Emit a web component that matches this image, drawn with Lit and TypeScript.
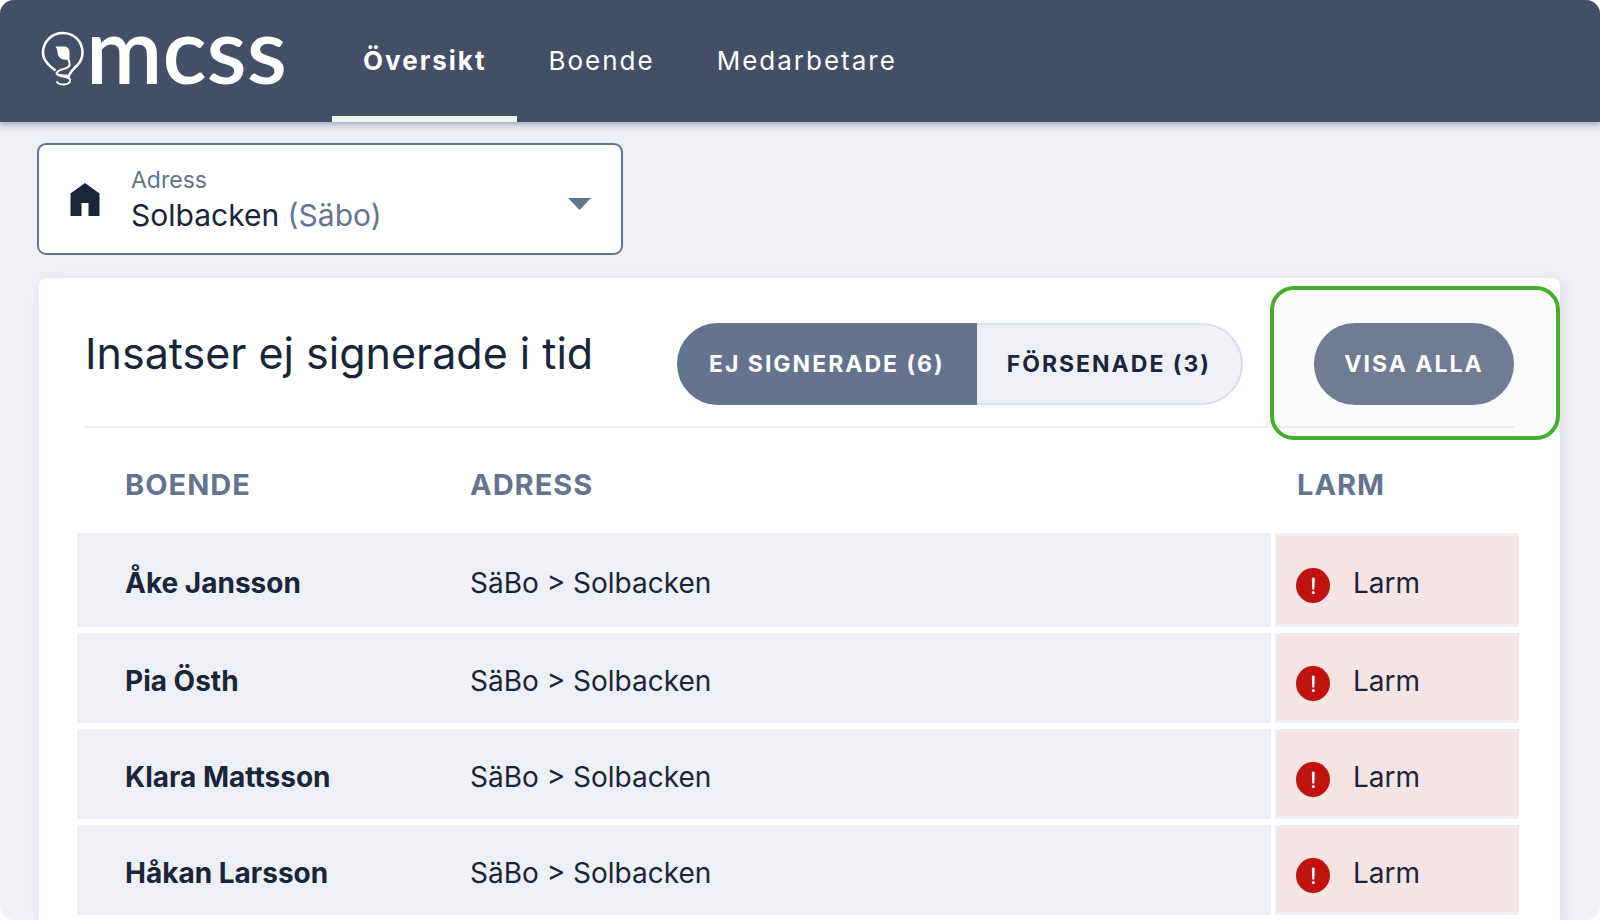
import { LitElement, html, css, svg } from "lit";
import { customElement, property, state } from "lit/decorators.js";
import { classMap } from "lit/directives/class-map.js";

interface Row {
  name: string;
  address: string;
  alarm: string;
}

@customElement("mcss-logo")
export class McssLogo extends LitElement {
  static styles = css`
    :host {
      display: block;
      width: 248px;
    }
    .logo {
      display: flex;
      align-items: center;
      gap: 1px;
      height: 118px;
      color: #fff;
      text-decoration: none;
    }
    .word {
      padding-bottom: 20px;
      font: 600 92px/112px "Lato Semibold", Lato, sans-serif;
    }
  `;

  render() {
    return html`<a class="logo" href="#">
      <svg width="44" height="56" viewBox="0 0 44 56" fill="none" stroke="#fff" aria-hidden="true">
        ${svg`
          <path stroke-width="2.6" d="M14.500 39.500C11.500 37.500 9 35.500 6.500 32.500C3.500 29 2 26 2 21.500C2 10.500 11 2 22 2C33 2 41.500 10.500 41.500 21.500C41.500 27 39.500 31 36 34.500C32 38.500 28 42 27.500 46.500" />
          <path stroke-width="1.900" d="M26.500 27C29.500 32 30 35.500 25 37.200C20 39 16 39.500 15.500 42.500C15.500 46 28 45 29 48.500C29.500 51 28 53.200 23 53.500C19.500 53.600 17 53 15.500 50.500M28 45C26 43.500 19 45.500 15.500 42.500" />
          <path fill="#fff" stroke="none" d="M14.500 15.500H24.500C27.500 16.500 28.500 19 28.500 22V28.500C22.500 29.500 18.500 28 17 24C16.300 20.500 16.500 18 14.500 15.500Z" />
        `}
      </svg>
      <span class="word">mcss</span>
    </a>`;
  }
}

@customElement("address-select")
export class AddressSelect extends LitElement {
  static styles = css`
    :host {
      display: block;
    }
    .box {
      position: relative;
      display: flex;
      align-items: center;
      box-sizing: border-box;
      width: 586px;
      max-width: 100%;
      height: 112px;
      padding: 0 30px 0 31px;
      border: 2px solid #64748f;
      border-radius: 9px;
      background: #fff;
      color: #1b2539;
    }
    .texts {
      display: flex;
      flex: 1;
      flex-direction: column;
      margin-left: 31px;
    }
    .label {
      font-size: 23px;
      line-height: 32px;
      color: #64748f;
    }
    .value {
      font-size: 30px;
      line-height: 38px;
    }
    .kind {
      color: #64748f;
    }
    .arrow {
      margin-top: 10px;
    }
    .native {
      position: absolute;
      inset: 0;
      width: 100%;
      height: 100%;
      opacity: 0;
      cursor: pointer;
    }
  `;

  render() {
    return html`<div class="box">
      <svg width="30" height="33" viewBox="0 0 30 33" aria-hidden="true">
        <path fill="#1b2539" d="M15 0L29.500 10.500V33H18.500V20H11.500V33H.5V10.500Z" />
      </svg>
      <div class="texts">
        <label class="label" for="address">Adress</label>
        <span class="value">Solbacken <span class="kind">(Säbo)</span></span>
      </div>
      <svg class="arrow" width="23" height="12" viewBox="0 0 23 12" aria-hidden="true">
        <path fill="#64748f" d="M0 0H23L11.500 12Z" />
      </svg>
      <select class="native" id="address">
        <option>Solbacken (Säbo)</option>
      </select>
    </div>`;
  }
}

@customElement("alarm-table")
export class AlarmTable extends LitElement {
  @property({ attribute: false }) rows: Row[] = [];

  static styles = css`
    :host {
      display: block;
    }
    .table {
      width: 100%;
      table-layout: fixed;
      border-collapse: separate;
      border-spacing: 0;
      font-size: 28px;
      line-height: 36px;
      text-align: left;
    }
    .head {
      box-sizing: border-box;
      height: 105px;
      padding: 8px 0 0 48px;
      color: #64748f;
      font-size: 29px;
      font-weight: 700;
      letter-spacing: 1px;
    }
    .head.resident {
      width: 393px;
    }
    .head.alarm {
      width: 248px;
      padding-left: 26px;
    }
    .cell {
      height: 90px;
      padding: 0 0 0 48px;
      border-bottom: 6px solid #fff;
      background: #eff0f5;
      background-clip: padding-box;
    }
    .head.address,
    .cell.address {
      padding-left: 0;
    }
    .first .cell {
      height: 94px;
    }
    .row:last-child .cell {
      border-bottom: 0;
    }
    .name {
      font-weight: 700;
    }
    .cell.alarm {
      padding-left: 21px;
      border-left: 4px solid #fff;
      background-color: #f4e4e3;
      box-shadow: inset 2px 0 #eff0f5, inset 0 3px #eff0f5, inset 0 -3px #eff0f5;
    }
    .content {
      display: flex;
      align-items: center;
      padding-top: 6px;
    }
    .content.flag {
      gap: 23px;
    }
    .badge {
      margin-top: 4px;
    }
  `;

  render() {
    return html`<table class="table">
      <thead>
        <tr>
          <th class="head resident">BOENDE</th>
          <th class="head address">ADRESS</th>
          <th class="head alarm">LARM</th>
        </tr>
      </thead>
      <tbody>
        ${this.rows.map(
          (r, i) => html`<tr class=${classMap({ row: true, first: i === 0 })}>
            <td class="cell name"><div class="content">${r.name}</div></td>
            <td class="cell address"><div class="content">${r.address}</div></td>
            <td class="cell alarm">
              <div class="content flag">
                <svg class="badge" width="34" height="35" viewBox="0 0 34 35" aria-hidden="true">
                  <ellipse cx="17" cy="17.500" rx="17" ry="17.500" fill="#c11212" />
                  <path fill="#fff" d="M15.800 10.500Q17.300 8.500 18.800 10.500L18.300 21.500H16.300Z" />
                  <circle cx="17.300" cy="24.500" r="1.500" fill="#fff" />
                </svg>
                ${r.alarm}
              </div>
            </td>
          </tr>`
        )}
      </tbody>
    </table>`;
  }
}

@customElement("app-root")
export class AppRoot extends LitElement {
  @state() private tab = "Översikt";
  @state() private filter = 0;

  private tabs = ["Översikt", "Boende", "Medarbetare"];
  private filters = ["EJ SIGNERADE (6)", "FÖRSENADE (3)"];
  private rows: Row[] = ["Åke Jansson", "Pia Östh", "Klara Mattsson", "Håkan Larsson"].map((name) => ({
    name,
    address: "SäBo > Solbacken",
    alarm: "Larm",
  }));

  static styles = css`
    :host {
      display: flex;
      flex-direction: column;
      min-height: 100vh;
      overflow: hidden;
      border-radius: 14px;
      background: #eff0f5;
      color: #1b2539;
      font-family: Inter, sans-serif;
    }
    .top {
      position: relative;
      display: flex;
      align-items: stretch;
      height: 122px;
      padding-left: 41px;
      background: #444e66;
      box-shadow: 0 1px 8px #64748fcc;
    }
    .tabs {
      display: flex;
      margin-left: 43px;
    }
    .tab {
      display: flex;
      align-items: center;
      padding: 4px 31px 0;
      border-bottom: 6px solid transparent;
      color: #fff;
      font-size: 26px;
      letter-spacing: 2px;
      text-decoration: none;
    }
    .tab.active {
      border-color: #eff1f3;
      font-weight: 700;
    }
    .main {
      display: flex;
      flex: 1;
      flex-direction: column;
      padding: 21px 40px 0 37px;
    }
    .card {
      flex: 1;
      margin: 23px 0 0 2px;
      padding: 45px 41px 0 38px;
      border-radius: 8px 8px 0 0;
      background: #fff;
      box-shadow: 3px 4px 14px #64748f26;
    }
    .bar {
      display: flex;
      align-items: flex-start;
      margin: 0 5px 0 8px;
      padding-bottom: 21px;
      border-bottom: 2px solid #eff0f5;
    }
    .title {
      flex: 1;
      margin: 0;
      font-size: 43px;
      font-weight: 400;
      line-height: 60px;
    }
    .pill {
      box-sizing: border-box;
      height: 82px;
      padding: 0 30px;
      border: 2px solid #dcdfec;
      border-radius: 41px;
      background: #eff0f5;
      color: #1b2539;
      font: 700 23px/28px Inter, sans-serif;
      letter-spacing: 2px;
      cursor: pointer;
    }
    .group {
      display: flex;
      margin-right: 71px;
    }
    .group .pill:first-child {
      border-radius: 41px 0 0 41px;
    }
    .group .pill:last-child {
      border-left-width: 0;
      border-radius: 0 41px 41px 0;
    }
    .pill.on {
      border-color: #64748f;
      background: #64748f;
      color: #fff;
    }
    .spot {
      position: relative;
      isolation: isolate;
    }
    .spot::before {
      content: "";
      position: absolute;
      z-index: -1;
      inset: -37px -46px -35px -44px;
      border: 4px solid #44b02a;
      border-radius: 24px;
      background: rgba(0, 0, 0, 0.016);
      background-clip: padding-box;
    }
    .pill.all {
      width: 200px;
      padding: 0;
      border-color: #717b94;
      background: #717b94;
      color: #fbfbfb;
    }
  `;

  render() {
    return html`
      <header class="top">
        <mcss-logo></mcss-logo>
        <nav class="tabs">
          ${this.tabs.map(
            (t) => html`<a
              href="#"
              class=${classMap({ tab: true, active: t === this.tab })}
              @click=${() => (this.tab = t)}
              >${t}</a
            >`
          )}
        </nav>
      </header>
      <main class="main">
        <address-select></address-select>
        <section class="card">
          <div class="bar">
            <h1 class="title">Insatser ej signerade i tid</h1>
            <div class="group">
              ${this.filters.map(
                (f, i) => html`<button
                  class=${classMap({ pill: true, on: i === this.filter })}
                  @click=${() => (this.filter = i)}
                >
                  ${f}
                </button>`
              )}
            </div>
            <div class="spot"><button class="pill all">VISA ALLA</button></div>
          </div>
          <alarm-table .rows=${this.rows}></alarm-table>
        </section>
      </main>
    `;
  }
}
